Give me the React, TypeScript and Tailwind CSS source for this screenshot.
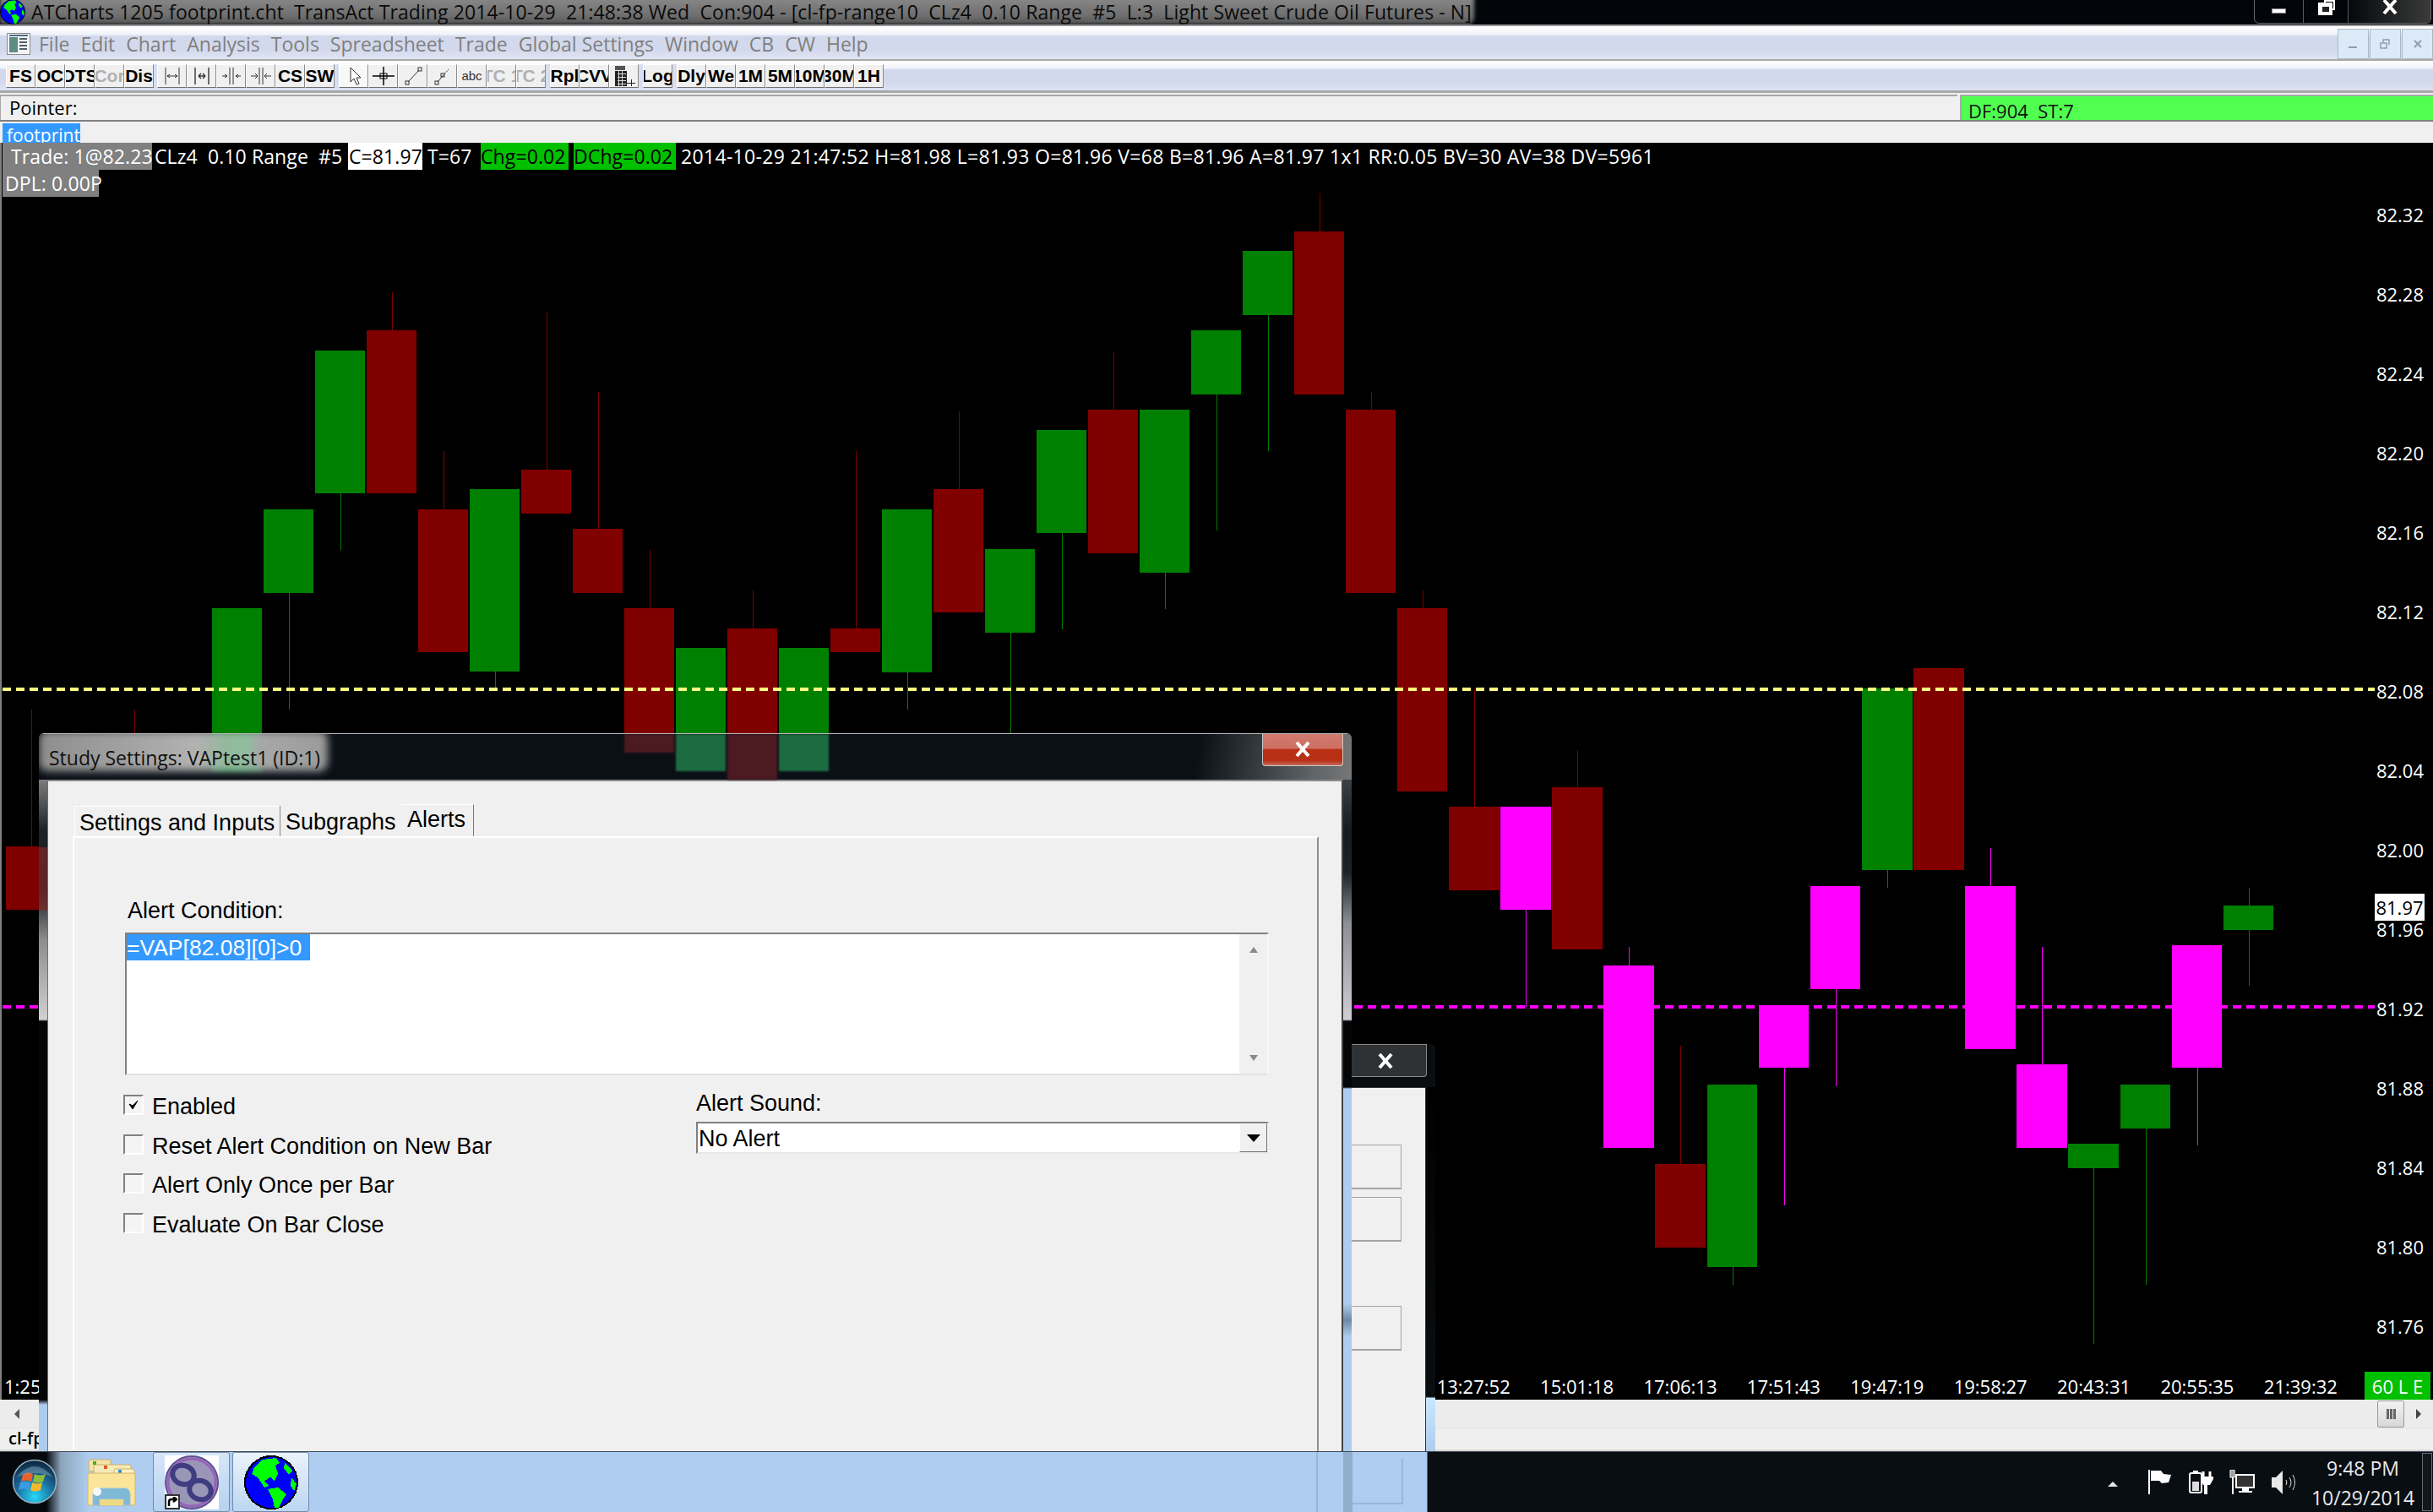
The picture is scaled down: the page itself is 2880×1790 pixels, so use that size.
import React from "react";

type C = [number, number, number, number, number?, number?];
const R = "#800000", G = "#008000", M = "#ff00ff";
// x0, x1, yTop, yBottom, wickTop, wickBottom
const red: C[] = [
  [7, 66, 1002, 1077, 840],
  [739, 798, 720, 900, 651],
  [434, 493, 391, 584, 346],
  [495, 554, 603, 772, 534],
  [617, 676, 556, 608, 370],
  [678, 737, 626, 702, 464],
  [861, 920, 744, 900, 699],
  [983, 1042, 744, 772, 534],
  [1105, 1164, 579, 725, 487],
  [1288, 1347, 485, 655, 416],
  [1532, 1591, 274, 467, 229],
  [1593, 1652, 485, 702, 464],
  [1654, 1713, 720, 937, 699],
  [1715, 1775, 955, 1054, 816],
  [1837, 1897, 932, 1124, 888],
  [1959, 2019, 1378, 1477, 1238],
  [2265, 2325, 791, 1030],
];
const green: C[] = [
  [251, 310, 720, 900],
  [312, 371, 603, 702, undefined, 840],
  [373, 432, 415, 584, undefined, 651],
  [556, 615, 579, 795, undefined, 814],
  [800, 859, 767, 900],
  [922, 981, 767, 900],
  [1044, 1103, 603, 796, undefined, 840],
  [1166, 1225, 650, 749, undefined, 868],
  [1227, 1286, 509, 631, undefined, 745],
  [1349, 1408, 485, 678, undefined, 721],
  [1410, 1469, 391, 467, undefined, 628],
  [1471, 1530, 297, 373, undefined, 534],
  [2021, 2080, 1284, 1500, undefined, 1521],
  [2204, 2264, 815, 1030, undefined, 1051],
  [2448, 2508, 1354, 1383, undefined, 1591],
  [2510, 2569, 1284, 1336, undefined, 1521],
  [2632, 2691, 1072, 1101, 1051, 1167],
];
const magenta: C[] = [
  [1776, 1836, 955, 1077, undefined, 1192],
  [1898, 1958, 1143, 1359, 1121],
  [2082, 2141, 1190, 1264, undefined, 1427],
  [2143, 2202, 1049, 1171, undefined, 1286],
  [2326, 2386, 1049, 1242, 1004],
  [2387, 2447, 1260, 1359, 1121],
  [2571, 2630, 1119, 1264, undefined, 1356],
];

function Candles({ data, color }: { data: C[]; color: string }) {
  return (
    <>
      {data.map(([a, b, t, bo, wt, wb], i) => {
        const cx = Math.round((a + b) / 2);
        return (
          <g key={i}>
            {wt !== undefined && <rect x={cx} y={wt} width={1} height={t - wt} fill={color} />}
            {wb !== undefined && <rect x={cx} y={bo} width={1} height={wb - bo} fill={color} />}
            <rect x={a} y={t} width={b - a} height={bo - t} fill={color} />
          </g>
        );
      })}
    </>
  );
}

function Chart() {
  return (
    <svg className="absolute left-[-2px] top-0" width={2880} height={1487} viewBox="0 169 2880 1487" shapeRendering="crispEdges">
      <rect x={159} y={840} width={1} height={40} fill={R} />
      <Candles data={red} color={R} />
      <Candles data={green} color={G} />
      <Candles data={magenta} color={M} />
      <line x1={3} x2={2811} y1={816} y2={816} stroke="#ffff80" strokeWidth={4} strokeDasharray="10 6" />
      <line x1={3} x2={2811} y1={1192} y2={1192} stroke="#ff00ff" strokeWidth={4} strokeDasharray="10 6" />
    </svg>
  );
}

function Globe({ size, pixel }: { size: number; pixel?: boolean }) {
  return (
    <svg width={size} height={size} viewBox="0 0 64 64" shapeRendering={pixel ? "crispEdges" : undefined}>
      <circle cx={32} cy={32} r={31} fill="#0000ff" stroke="#000" strokeWidth={2} />
      <path d="M12 14 L22 5 L38 3 L42 9 L37 12 L40 22 L36 30 L31 26 L24 30 L29 36 L24 38 L16 26 L9 22 Z" fill="#00ff00" />
      <path d="M48 9 L57 18 L53 23 L47 15 Z" fill="#00ff00" />
      <path d="M56 26 L62 34 L59 42 L55 36 Z" fill="#00ff00" />
      <path d="M28 40 L40 38 L50 46 L46 52 L41 62 L36 62 L34 52 Z" fill="#00ff00" />
    </svg>
  );
}

const txt = "text-[23px] leading-[32px] tracking-[0.1px] whitespace-pre";

function TbBtn({ label, gray, active, children }: { label?: string; gray?: boolean; active?: boolean; children?: React.ReactNode }) {
  return (
    <div
      className={`flex h-[28px] w-[35px] shrink-0 items-center justify-center overflow-hidden border border-t-white border-l-white border-r-[#8a8a8a] border-b-[#707070] ${active ? "bg-[#f8f8f8]" : "bg-[#f0f0f0]"}`}
    >
      {label && (
        <span className={`shrink-0 whitespace-pre font-['Liberation_Sans',sans-serif] text-[21px] font-bold leading-none ${gray ? "text-[#b0b0b0]" : "text-black"}`}>
          {label}
        </span>
      )}
      {children}
    </div>
  );
}

const Ico = ({ children }: { children: React.ReactNode }) => (
  <svg width={28} height={24} viewBox="0 0 28 24" fill="none" stroke="#333" strokeWidth={1}>
    {children}
  </svg>
);

function Toolbar() {
  return (
    <div className="flex h-[35px] shrink-0 items-center bg-[linear-gradient(180deg,#ffffff_0%,#f0f3fa_25%,#d3d9ec_30%,#d3d9ec_70%,#dde3f1_100%)] pl-[7px]">
      <div className="flex items-center bg-[#f0f0f0]">
        <TbBtn label="FS" />
        <TbBtn label="OC" />
        <TbBtn label="DTS" />
        <TbBtn label="Cor" gray />
        <TbBtn label="Dis" />
        <div className="h-[28px] w-[4px] bg-[#d8def0]" />
        <TbBtn><Ico><path d="M6 2v20M22 2v20M8 12h12M8 12l3-2M8 12l3 2M20 12l-3-2M20 12l-3 2" /></Ico></TbBtn>
        <TbBtn><Ico><path d="M6 2v20M22 2v20M10 12h8M10 12l3-3M10 12l3 3M18 12l-3-3M18 12l-3 3" strokeWidth={1.4} /></Ico></TbBtn>
        <TbBtn><Ico><path d="M12 2v20M16 2v20M3 12h6M9 12l-3-2M9 12l-3 2M25 12h-6M19 12l3-2M19 12l3 2" /></Ico></TbBtn>
        <TbBtn><Ico><path d="M12 2v20M16 2v20M2 12h8M10 12l-3-3M10 12l-3 3M26 12h-8M18 12l3-3M18 12l3 3" /></Ico></TbBtn>
        <TbBtn label="CS" />
        <TbBtn label="SW" />
        <div className="h-[28px] w-[5px] bg-[#d8def0]" />
        <TbBtn active><Ico><path d="M10 2v17l4-4 3 7 3-1-3-7h5Z" fill="#fff" /></Ico></TbBtn>
        <TbBtn><Ico><path d="M14 1v22M1 12h26" stroke="#000" strokeWidth={1.5} /><rect x={10} y={9} width={8} height={6} stroke="#000" /></Ico></TbBtn>
        <TbBtn><Ico><path d="M8 19 21 5" /><rect x={5} y={18} width={4} height={4} /><rect x={20} y={2} width={4} height={4} /></Ico></TbBtn>
        <TbBtn><Ico><path d="M8 19 14 12" /><path d="M14 12 21 4" strokeDasharray="2 1" /><rect x={5} y={18} width={4} height={4} /><rect x={12} y={9} width={4} height={4} /></Ico></TbBtn>
        <TbBtn><span className="font-['Liberation_Sans',sans-serif] text-[15px] leading-none text-[#333]">abc</span></TbBtn>
        <TbBtn label="TC 1" gray />
        <TbBtn label="TC 2" gray />
        <div className="h-[28px] w-[5px] bg-[#d8def0]" />
        <TbBtn label="Rpl" />
        <TbBtn label="CVV" />
        <TbBtn>
          <svg width={30} height={26} viewBox="0 0 30 26" shapeRendering="crispEdges">
            <rect x={4} y={1} width={12} height={5} fill="#555" />
            <rect x={4} y={7} width={14} height={18} fill="#222" />
            <path d="M7 10h10M7 14h10M7 18h10M7 22h10" stroke="#ddd" />
            <path d="M8 7v18M12 7v18" stroke="#ddd" />
            <path d="M18 21h10M23 17v8" stroke="#222" />
          </svg>
        </TbBtn>
        <div className="h-[28px] w-[5px] bg-[#d8def0]" />
        <TbBtn label="Log" />
        <div className="h-[28px] w-[5px] bg-[#d8def0]" />
        <TbBtn label="Dly" />
        <TbBtn label="We" />
        <TbBtn label="1M" />
        <TbBtn label="5M" />
        <TbBtn label="10M" />
        <TbBtn label="30M" />
        <TbBtn label="1H" />
      </div>
    </div>
  );
}

function Menu() {
  const items = ["File", "Edit", "Chart", "Analysis", "Tools", "Spreadsheet", "Trade", "Global Settings", "Window", "CB", "CW", "Help"];
  return (
    <div className="relative flex h-[37px] shrink-0 items-center bg-[linear-gradient(180deg,#ffffff_0%,#eef1f9_22%,#d3d9ec_26%,#d3d9ec_70%,#dfe5f3_100%)] pl-[8px]">
      <svg width={28} height={28} viewBox="0 0 28 28" className="mr-[10px] shrink-0">
        <rect x={0.5} y={1.5} width={27} height={25} fill="#f4f4f4" stroke="#8a8a8a" />
        <rect x={3} y={6} width={10} height={18} fill="#5e8d84" />
        <rect x={3} y={3} width={22} height={2} fill="#506a8a" />
        <path d="M15 8h9M15 12h9M15 16h9M15 20h9" stroke="#50606a" strokeWidth={2} />
      </svg>
      <div className="flex gap-[13px] pt-[1px] text-[23px] leading-none text-[#7f7f7f]">
        {items.map((m) => (
          <span key={m}>{m}</span>
        ))}
      </div>
      <div className="absolute right-0 top-0 flex gap-[1px] pt-[1px]">
        {["min", "res", "x"].map((k) => (
          <div key={k} className="flex h-[36px] w-[37px] items-center justify-center border border-[#a9b9c6] bg-[#dceaf7]">
            <svg width={14} height={14} viewBox="0 0 14 14" fill="none" stroke="#8d9eab" strokeWidth={2}>
              {k === "min" && <path d="M1 11h10" />}
              {k === "res" && <path d="M1 6h7v6H1ZM4 5V2h7v6" strokeWidth={1.5} />}
              {k === "x" && <path d="M3 3l8 8M11 3l-8 8" />}
            </svg>
          </div>
        ))}
      </div>
    </div>
  );
}

function TitleBar() {
  return (
    <div className="relative h-[31px] shrink-0 overflow-hidden bg-[#02060a]">
      <div className="absolute left-0 top-[-6px] h-[35px] w-[1745px] rounded-br-[8px] bg-[linear-gradient(180deg,#8c8c8c_0%,#6f6f6f_70%,#555555_100%)] blur-[2px]" />
      <div className="absolute left-0 top-0 flex h-[28px] items-center">
        <div className="w-[37px]"><Globe size={30} /></div>
        <span className="whitespace-pre text-[23px] leading-none tracking-[0.1px] text-[#0a0a0a]">
          {"ATCharts 1205 footprint.cht  TransAct Trading 2014-10-29  21:48:38 Wed  Con:904 - [cl-fp-range10  CLz4  0.10 Range  #5  L:3  Light Sweet Crude Oil Futures - N]"}
        </span>
      </div>
      <div className="absolute right-[2px] top-[-1px] flex h-[29px] rounded-b-[6px] border border-[#6a6a6a]">
        <div className="flex w-[58px] items-center justify-center border-r border-[#5a5a5a]">
          <div className="mt-[-2px] h-[6px] w-[17px] border border-[#888] bg-white" />
        </div>
        <div className="relative flex w-[53px] items-start justify-center border-r border-[#5a5a5a]">
          <div className="absolute left-[24px] top-0 h-[12px] w-[13px] border-2 border-white" />
          <div className="absolute left-[17px] top-[3px] flex h-[15px] w-[17px] items-center justify-center bg-white">
            <div className="h-[6px] w-[8px] bg-[#222]" />
          </div>
        </div>
        <div className="flex w-[97px] items-start justify-center bg-[linear-gradient(90deg,#05090c,#3a3a3a)]">
          <svg width={18} height={17} viewBox="0 0 18 17" stroke="#fff" strokeWidth={4}><path d="M2 0l14 16M16 0 2 16" /></svg>
        </div>
      </div>
      <div className="absolute inset-x-0 bottom-0 h-[2px] bg-[#9a9a9a]" />
    </div>
  );
}

function Pointer() {
  return (
    <div className="flex h-[32px] shrink-0 bg-[#f0f0f0] pt-[2px]">
      <div className="flex w-[2317px] items-start border-l border-t-2 border-[#a8a8a8] pl-[10px] pt-[2px] text-[22px] leading-none text-black">Pointer:</div>
      <div className="ml-[3px] flex flex-1 items-start overflow-hidden border-t-2 border-l-2 border-[#a8a8a8] bg-[#50ff50] pl-[8px] pt-[6px]">
        <span className="whitespace-pre text-[22px] leading-none text-[#111]">{"DF:904  ST:7"}</span>
      </div>
    </div>
  );
}

function TabStrip() {
  return (
    <div className="h-[27px] shrink-0 overflow-hidden border-t-2 border-[#808080] bg-[#f0f0f0] pl-[3px] pt-[2px]">
      <div className="h-[25px] w-[92px] overflow-hidden bg-[#3399ff] pl-[5px] text-[21px] leading-[28px] text-white">footprint</div>
    </div>
  );
}

function InfoRows() {
  return (
    <div className="absolute left-[1px] top-0 text-white">
      <div className="flex h-[32px]">
        <span className={`${txt} w-[177px] bg-[#808080] pl-[10px]`}>Trade: 1@82.23</span>
        <span className={`${txt} w-[232px] pl-[3px]`}>{"CLz4  0.10 Range  #5"}</span>
        <span className={`${txt} w-[88px] bg-white pl-[1px] text-black`}>C=81.97</span>
        <span className={`${txt} w-[69px] pl-[6px]`}>T=67</span>
        <span className={`${txt} w-[104px] bg-[#00c000] text-black`}>Chg=0.02</span>
        <span className="w-[6px]" />
        <span className={`${txt} w-[121px] bg-[#00c000] text-black`}>DChg=0.02</span>
        <span className="whitespace-pre pl-[6px] text-[23px] leading-[32px] tracking-[0.32px]">2014-10-29 21:47:52 H=81.98 L=81.93 O=81.96 V=68 B=81.96 A=81.97 1x1 RR:0.05 BV=30 AV=38 DV=5961</span>
      </div>
      <div className={`${txt} h-[32px] w-[114px] bg-[#808080] pl-[3px]`}>DPL: 0.00P</div>
    </div>
  );
}

function PriceAxis() {
  const prices = ["82.32", "82.28", "82.24", "82.20", "82.16", "82.12", "82.08", "82.04", "82.00", "81.96", "81.92", "81.88", "81.84", "81.80", "81.76"];
  return (
    <>
      <div className="absolute right-0 top-[38px] flex w-[70px] flex-col text-white">
        {prices.map((p) => (
          <div key={p} className="flex h-[94px] items-center justify-end pr-[11px] text-[22px] leading-none">{p}</div>
        ))}
      </div>
      <div className="absolute left-[2809px] top-[889px] flex h-[32px] w-[59px] items-center justify-center bg-white text-[22px] leading-none text-black">81.97</div>
    </>
  );
}

function TimeAxis() {
  const times = ["13:27:52", "15:01:18", "17:06:13", "17:51:43", "19:47:19", "19:58:27", "20:43:31", "20:55:35", "21:39:32"];
  return (
    <div className="absolute inset-x-0 bottom-0 flex h-[33px] items-center text-[22px] leading-none text-white">
      <span className="w-[1681px] pl-[3px]">1:25</span>
      <div className="flex w-[1116px]">
        {times.map((t) => (
          <span key={t} className="w-[122.4px] text-center">{t}</span>
        ))}
      </div>
      <span className="flex h-[33px] w-[78px] items-center justify-center whitespace-pre bg-[#00c000]">60 L E</span>
    </div>
  );
}

function Check({ label, checked }: { label: string; checked?: boolean }) {
  return (
    <div className="flex h-[46.7px] items-start">
      <div className="flex h-[24px] w-[24px] shrink-0 items-center justify-center border-2 border-b-white border-r-white border-l-[#808080] border-t-[#808080] bg-[#f4f4f4]">
        {checked && (
          <svg width={12} height={12} viewBox="0 0 12 12"><path d="M1 5l4 6 6-10-6 6z" fill="#000" stroke="#000" /></svg>
        )}
      </div>
      <span className="ml-[10px] mt-[-1px] whitespace-pre text-[27px] leading-[30px] text-black">{label}</span>
    </div>
  );
}

function MainDialog() {
  return (
    <div className="absolute left-[46px] top-[868px] flex h-[850px] w-[1554px] flex-col overflow-hidden rounded-t-[6px] border-t border-[#b8b8b8] font-['Liberation_Sans',sans-serif]">
      {/* glass */}
      <div className="relative h-[54px] shrink-0 bg-[linear-gradient(100deg,#0b1017_0%,#0b1017_88%,#5f6467_97%,#777_100%)]">
        <div className="absolute left-[205px] top-0 h-[44px] w-[59px] bg-[#1d6b41] blur-[2px]" />
        <div className="absolute left-[693px] top-0 h-[22px] w-[59px] bg-[#4e1a22] blur-[1px]" />
        <div className="absolute left-[754px] top-0 h-[44px] w-[59px] bg-[#1d6b41] blur-[1px]" />
        <div className="absolute left-[815px] top-0 h-[54px] w-[59px] bg-[#4e1a22] blur-[1px]" />
        <div className="absolute left-[876px] top-0 h-[44px] w-[59px] bg-[#1d6b41] blur-[1px]" />
        <div className="absolute left-0 top-[-4px] h-[48px] w-[342px] rounded-[10px] bg-[linear-gradient(90deg,#8e8e8e,#b2b2b2_55%,rgba(150,190,160,0.95)_66%,rgba(150,195,165,0.95)_72%,#a8a8a8_76%,#9a9a9a_100%)] blur-[5px]" />
        <div className="absolute left-[12px] top-[13px] whitespace-pre font-['Open_Sans',sans-serif] text-[23px] leading-[30px] text-[#101010]">Study Settings: VAPtest1 (ID:1)</div>
        <div className="absolute right-[10px] top-[-1px] flex h-[39px] w-[96px] items-center justify-center rounded-b-[4px] border border-t-0 border-[#c8c8c8] bg-[linear-gradient(180deg,#d27d70_0%,#cc6f62_48%,#b82f14_50%,#b83015_85%,#c76a5a_100%)]">
          <svg width={18} height={18} viewBox="0 0 18 18" stroke="#fff" strokeWidth={4}><path d="M2 1l14 16M16 1 2 17" /></svg>
        </div>
      </div>
      <div className="flex min-h-0 flex-1">
        {/* left glass edge */}
        <div className="relative w-[10px] shrink-0 bg-[linear-gradient(180deg,#7d7d7d_0px,#1c2328_60px,#141a1f_130px,#8d8d8d_190px,#d0d0d0_284px,#050505_286px,#050505_734px,#aecdee_740px)]">
          <div className="absolute inset-x-0 top-[80px] h-[75px] bg-[#7a2a2a] opacity-70" />
        </div>
        {/* content */}
        <div className="flex min-w-0 flex-1 flex-col border-l border-t-2 border-r-2 border-l-[#707070] border-t-[#8a8a8a] border-r-[#444] bg-[#f0f0f0] pl-[29px] pr-[27px] pt-[27px]">
          <div className="flex h-[38px] shrink-0 items-end pl-[2px] text-[27px] leading-[30px] text-black">
            <div className="flex h-[36px] w-[243px] items-start border-l border-t border-white pl-[5px] pt-[4px]">Settings and Inputs</div>
            <div className="flex h-[36px] w-[144px] items-start border-l border-[#888] pl-[6px] pt-[4px]">Subgraphs</div>
            <div className="flex h-[38px] w-[86px] items-start border-r border-t border-r-[#777] border-t-white pl-[7px] pt-[2px]">Alerts</div>
          </div>
          <div className="min-h-0 flex-1 border-l-2 border-r-2 border-t-2 border-l-white border-r-[#909090] border-t-white pl-[60px] pr-[57px] pt-[71px]">
            <div className="ml-[3px] text-[27px] leading-[30px] text-black">Alert Condition:</div>
            <div className="mt-[11px] flex h-[169px] border-2 border-b-[#e2e2e2] border-l-[#808080] border-r-[#f8f8f8] border-t-[#808080] bg-white">
              <div className="flex-1 overflow-hidden">
                <span className="block h-[31px] w-[217px] whitespace-pre bg-[#3399ff] text-[26.5px] leading-[33px] text-white">{"=VAP[82.08][0]>0"}</span>
              </div>
              <div className="flex w-[33px] flex-col items-center justify-between bg-[#f0f0f0] py-[15px]">
                <div className="h-0 w-0 border-x-[5px] border-b-[7px] border-x-transparent border-b-[#8a8a8a]" />
                <div className="h-0 w-0 border-x-[5px] border-t-[7px] border-x-transparent border-t-[#8a8a8a]" />
              </div>
            </div>
            <div className="mt-[23px] flex">
              <div className="ml-[-2px] w-[678px] shrink-0">
                <Check label="Enabled" checked />
                <Check label="Reset Alert Condition on New Bar" />
                <Check label="Alert Only Once per Bar" />
                <Check label="Evaluate On Bar Close" />
              </div>
              <div className="min-w-0 flex-1">
                <div className="mt-[-5px] text-[27px] leading-[30px] text-black">Alert Sound:</div>
                <div className="mt-[7px] flex h-[38px] items-stretch border-2 border-b-[#e8e8e8] border-l-[#808080] border-r-[#f0f0f0] border-t-[#808080] bg-white">
                  <span className="flex-1 pl-[1px] text-[27px] leading-[37px] text-black">No Alert</span>
                  <div className="flex w-[33px] items-center justify-center border border-t-white border-l-white border-b-[#707070] border-r-[#707070] bg-[#f0f0f0]">
                    <div className="h-0 w-0 border-x-[8px] border-t-[9px] border-x-transparent border-t-black" />
                  </div>
                </div>
              </div>
            </div>
          </div>
        </div>
        {/* right glass edge */}
        <div className="w-[10px] shrink-0 bg-[linear-gradient(180deg,#3c4145_0px,#141c22_60px,#1c2328_110px,#8d9094_170px,#d0ccd4_284px,#050505_286px,#050505_364px,#aecdee_366px,#aecdee_620px,#6f8aa6_640px,#aecdee_660px)]" />
      </div>
    </div>
  );
}

function BackDialog() {
  return (
    <div className="absolute left-[1590px] top-[1236px] flex h-[482px] w-[109px] flex-col">
      <div className="flex h-[51px] shrink-0 rounded-tr-[6px] bg-[#0b0e11]">
        <div className="flex h-[39px] w-[99px] items-center justify-center rounded-br-[4px] border-b border-r border-t border-[#8a8a8a] bg-[#2f3234] pl-[2px]">
          <svg width={18} height={18} viewBox="0 0 18 18" stroke="#fff" strokeWidth={4}><path d="M2 1l14 16M16 1 2 17" /></svg>
        </div>
      </div>
      <div className="flex min-h-0 flex-1">
        <div className="flex w-[98px] shrink-0 flex-col border-r border-t border-[#333] bg-[#f0f0f0]">
          <div className="mt-[67px] h-[53px] w-[69px] border-b-2 border-r border-t border-[#a4a4a4]" />
          <div className="mt-[9px] h-[53px] w-[69px] border-b-2 border-r border-t border-[#a4a4a4]" />
          <div className="mt-[76px] h-[53px] w-[69px] border-b-2 border-r border-t border-[#a4a4a4]" />
        </div>
        <div className="w-[11px] bg-[linear-gradient(180deg,#000_0%,#0b0e11_85%,#c8e8ff_85.5%,#aecdee_100%)]" />
      </div>
    </div>
  );
}

function ScrollAndTabs() {
  return (
    <>
      <div className="flex h-[34px] shrink-0 items-center justify-between border-b border-[#e4e4e4] bg-[#ececec] pl-[17px] pr-[14px]">
        <div className="h-0 w-0 border-y-[6px] border-r-[6px] border-y-transparent border-r-[#555]" />
        <div className="flex items-center">
          <div className="flex h-[32px] w-[32px] items-center justify-center gap-[1px] rounded-[2px] border border-[#9a9a9a] bg-[linear-gradient(180deg,#f2f2f2,#d8d8d8)]">
            <div className="h-[12px] w-[3px] bg-[#666]" />
            <div className="h-[12px] w-[3px] bg-[#666]" />
            <div className="h-[12px] w-[3px] bg-[#666]" />
          </div>
          <div className="ml-[14px] h-0 w-0 border-y-[6px] border-l-[6px] border-y-transparent border-l-[#444]" />
        </div>
      </div>
      <div className="h-[27px] shrink-0 border-b-2 border-[#d8d8d8] bg-[#efefef] pl-[10px] text-[20px] font-semibold leading-[24px] text-black">cl-fp-range10</div>
    </>
  );
}

function Taskbar() {
  return (
    <div className="relative flex h-[72px] shrink-0 items-start border-t border-[#3c4854] bg-[linear-gradient(90deg,#05090d_0px,#05090d_55px,#8ba4bb_72px,#aecdf0_105px,#aecdf0_1689px,#090e13_1690px,#090e13_100%)]">
      <div className="absolute bottom-0 left-[1558px] top-0 w-[2px] bg-[#9ab5d4]" />
      <div className="absolute bottom-0 left-[1590px] top-0 w-[11px] bg-[#8aa6c4] opacity-80" />
      <div className="absolute bottom-[9px] left-[1601px] top-[8px] w-[60px] border-b-2 border-r-2 border-[#8fa9c6] opacity-60" />
      {/* Orb */}
      <div className="ml-[14px] mt-[8px] shrink-0">
        <svg width={54} height={54} viewBox="0 0 54 54">
          <defs>
            <radialGradient id="orb" cx="50%" cy="85%" r="80%">
              <stop offset="0%" stopColor="#28d8f8" />
              <stop offset="55%" stopColor="#1a6a9a" />
              <stop offset="100%" stopColor="#0d2a45" />
            </radialGradient>
          </defs>
          <circle cx={27} cy={27} r={25.5} fill="url(#orb)" stroke="#9ab4c4" strokeWidth={1.5} />
          <path d="M13 19q6-4 12-1l-2 9q-6-3-12 0z" fill="#e8622a" />
          <path d="M27 18q6 3 13 0l-3 9q-6 3-12 0z" fill="#8fbb3c" />
          <path d="M10 28q6-3 12 0l-2 9q-6-3-12 0z" fill="#3d9ae0" />
          <path d="M24 28q6 3 12 0l-2 9q-6 3-12 0z" fill="#f5b82a" />
          <path d="M5 22q22-26 44 0q-22-10-44 0z" fill="#fff" opacity=".25" />
        </svg>
      </div>
      {/* Folder */}
      <div className="ml-[35px] mt-[8px] shrink-0">
        <svg width={58} height={58} viewBox="0 0 58 58">
          <rect x={2} y={1} width={26} height={14} rx={2} fill="#f5e3a8" stroke="#cbb06a" />
          <rect x={8} y={7} width={44} height={14} rx={2} fill="#f8eab8" stroke="#cbb06a" />
          <rect x={32} y={12} width={24} height={12} rx={2} fill="#fff3c8" stroke="#cbb06a" />
          <rect x={7} y={3} width={4} height={4} fill="#3fb030" />
          <rect x={20} y={8} width={4} height={4} fill="#e05a20" />
          <rect x={37} y={13} width={4} height={4} fill="#3090d0" />
          <rect x={1} y={17} width={56} height={38} rx={2} fill="#fbe59a" stroke="#d3b567" />
          <path d="M7 55V43q0-8 6-8h32q6 0 6 8v12h-8v-7H15v7z" fill="#7fb9d8" stroke="#9dc4d8" />
          <rect x={15} y={48} width={28} height={7} fill="#f0d985" />
          <circle cx={12} cy={39} r={5} fill="#fff" opacity=".9" />
        </svg>
      </div>
      {/* Pinned */}
      <div className="ml-[20px] flex h-[71px] w-[91px] shrink-0 items-center justify-center rounded-[3px] border border-[#6f8bab] bg-[linear-gradient(180deg,#d6e6f8,#b6d2f0)]">
        <div className="relative h-[64px] w-[64px] bg-white">
          <svg width={64} height={64} viewBox="0 0 64 64">
            <circle cx={32} cy={32} r={31} fill="#9a96b8" stroke="#5c4f93" strokeWidth={2} />
            <circle cx={32} cy={32} r={28} fill="none" stroke="#9a62b8" strokeWidth={3} />
            <ellipse cx={22} cy={23} rx={13} ry={11} fill="#9a96b8" stroke="#403c80" strokeWidth={6} transform="rotate(20 22 23)" />
            <ellipse cx={42} cy={41} rx={13} ry={11} fill="#9a96b8" stroke="#403c80" strokeWidth={6} transform="rotate(20 42 41)" />
          </svg>
          <div className="absolute bottom-0 left-0 flex h-[18px] w-[18px] items-center justify-center border-2 border-[#333] bg-white">
            <svg width={12} height={12} viewBox="0 0 12 12" stroke="#000" strokeWidth={2.5} fill="none"><path d="M2 11V6q0-3 3-3h5M7 0l4 3-4 3" /></svg>
          </div>
        </div>
      </div>
      <div className="ml-[3px] flex h-[71px] w-[91px] shrink-0 items-center justify-center rounded-[3px] border border-[#6f8bab] bg-[linear-gradient(180deg,#eaf3fc,#bcd6f2)]">
        <Globe size={64} pixel />
      </div>
      {/* Tray */}
      <div className="absolute left-[2495px] top-0 flex h-[71px] items-center">
        <div className="mt-[4px] h-0 w-0 border-x-[6px] border-b-[6px] border-x-transparent border-b-[#dfe6ee]" />
        <svg width={30} height={30} viewBox="0 0 30 30" className="ml-[35px]" fill="#fff">
          <rect x={1} y={0} width={2} height={29} />
          <path d="M4 1h12l3 4 9 1-3 9-8 1-3-3H4z" />
        </svg>
        <svg width={30} height={30} viewBox="0 0 30 30" className="ml-[19px]" fill="none">
          <rect x={1} y={4} width={14} height={23} rx={2} stroke="#fff" strokeWidth={2} />
          <rect x={5} y={1} width={6} height={3} fill="#fff" />
          <rect x={4} y={14} width={8} height={11} fill="#ddd" />
          <path d="M14 8h15v3l-4 7h-3v11h-4V18h-1l-3-7z" fill="#fff" />
          <path d="M17 2v6M25 2v6" stroke="#fff" strokeWidth={3} />
        </svg>
        <svg width={30} height={30} viewBox="0 0 30 30" className="ml-[18px]" fill="none">
          <rect x={1} y={0} width={5} height={9} fill="#9a9a9a" stroke="#fff" />
          <rect x={3} y={9} width={2} height={20} fill="#fff" />
          <rect x={8} y={6} width={21} height={15} stroke="#fff" strokeWidth={2} fill="#333" />
          <path d="M15 22h8v3h4v2H11v-2h4z" fill="#fff" />
        </svg>
        <svg width={30} height={30} viewBox="0 0 30 30" className="ml-[19px]" fill="none">
          <path d="M1 9h5l8-8v28l-8-8H1z" fill="#e8e8e8" />
          <path d="M18 12q2 3 0 6M22 9q4 6 0 12M26 6q5 9 0 18" stroke="#ddd" strokeWidth={1} />
        </svg>
      </div>
      <div className="absolute left-[2737px] top-0 flex h-[71px] w-[120px] flex-col items-center justify-center gap-[12px] pt-[3px] text-[23px] leading-none text-[#e8e8e8]">
        <span>9:48 PM</span>
        <span>10/29/2014</span>
      </div>
      <div className="absolute bottom-[1px] right-[1px] top-[1px] w-[12px] border border-[#6a7076] bg-[#12171c]" />
    </div>
  );
}

export default function App() {
  return (
    <div className="relative flex h-[1790px] w-[2880px] flex-col overflow-hidden bg-black font-['Open_Sans',sans-serif]">
      <TitleBar />
      <div className="h-[2px] shrink-0 bg-white" />
      <Menu />
      <div className="h-[2px] shrink-0 bg-[#a8a8a8]" />
      <Toolbar />
      <div className="h-[3px] shrink-0 bg-[#a8a8a8]" />
      <Pointer />
      <TabStrip />
      <div className="relative min-h-0 flex-1 overflow-hidden border-l-2 border-[#808080] bg-black">
        <Chart />
        <InfoRows />
        <PriceAxis />
        <TimeAxis />
      </div>
      <ScrollAndTabs />
      <Taskbar />
      <BackDialog />
      <MainDialog />
    </div>
  );
}
